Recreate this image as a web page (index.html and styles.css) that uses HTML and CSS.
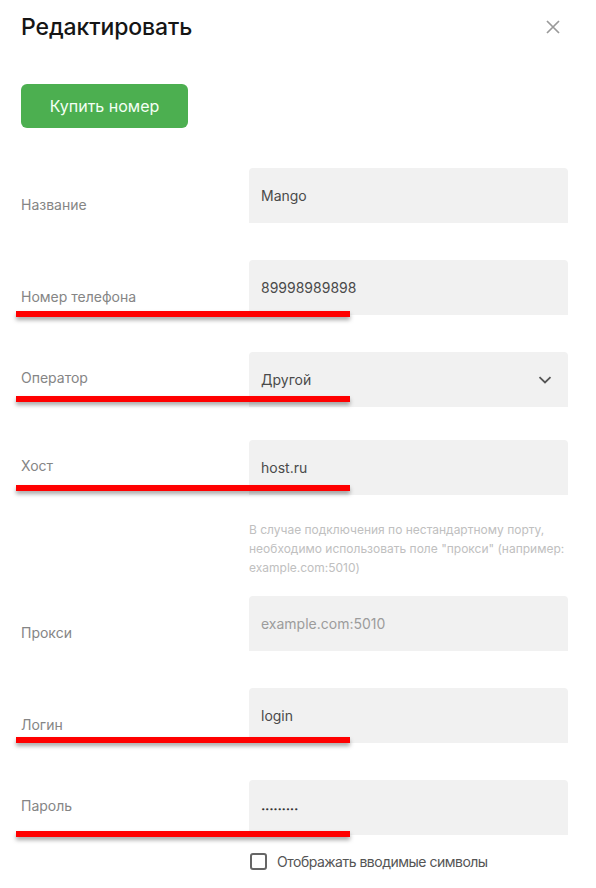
FILE: index.html
```html
<!DOCTYPE html>
<html lang="ru">
<head>
<meta charset="utf-8">
<title>Редактировать</title>
<link rel="stylesheet" href="styles.css">
</head>
<body>
<div class="modal">
  <header class="head">
    <h1 class="title">Редактировать</h1>
    <button class="close" aria-label="Закрыть">
      <svg width="14" height="14" viewBox="0 0 14 14"><path d="M1 1 L13 13 M13 1 L1 13" stroke="#9a9a9a" stroke-width="1.7" fill="none"/></svg>
    </button>
  </header>

  <button class="buy">Купить номер</button>

  <div class="form">
    <div class="row row-first">
      <label class="lbl lbl-low">Название</label>
      <div class="field"><span class="val">Mango</span></div>
    </div>

    <div class="row">
      <label class="lbl lbl-low">Номер телефона</label>
      <div class="field"><span class="val">89998989898</span></div>
      <span class="mark mark-a"></span>
    </div>

    <div class="row">
      <label class="lbl lbl-mid">Оператор</label>
      <div class="field field-select">
        <span class="val">Другой</span>
        <svg class="chev" width="14" height="8" viewBox="0 0 14 8"><path d="M1.5 1.2 L7 6.5 L12.5 1.2" stroke="#555" stroke-width="1.8" fill="none"/></svg>
      </div>
      <span class="mark mark-b"></span>
    </div>

    <div class="row row-tight">
      <label class="lbl lbl-mid">Хост</label>
      <div class="field"><span class="val">host.ru</span></div>
      <span class="mark mark-b2"></span>
    </div>

    <p class="hint">В случае подключения по нестандартному порту,<br>необходимо использовать поле "прокси" (например:<br>example.com:5010)</p>

    <div class="row row-after-hint">
      <label class="lbl lbl-low">Прокси</label>
      <div class="field"><span class="val placeholder">example.com:5010</span></div>
    </div>

    <div class="row">
      <label class="lbl lbl-low">Логин</label>
      <div class="field"><span class="val">login</span></div>
      <span class="mark mark-c"></span>
    </div>

    <div class="row">
      <label class="lbl lbl-mid">Пароль</label>
      <div class="field"><span class="val dots">•••••••••</span></div>
      <span class="mark mark-a"></span>
    </div>

    <div class="check-row">
      <span class="check"></span>
      <span class="check-text">Отображать вводимые символы</span>
    </div>
  </div>
</div>
</body>
</html>
```

FILE: styles.css
```css
html, body {
  margin: 0;
  padding: 0;
  background: #ffffff;
}
body {
  font-family: Inter, "Open Sans", "Liberation Sans", sans-serif;
  color: #333;
  width: 596px;
  height: 888px;
  overflow: hidden;
}
.modal {
  padding: 12px 28px 0 21px;
}
.head {
  display: flex;
  justify-content: space-between;
  align-items: flex-start;
}
.title {
  margin: 0;
  font-size: 23px;
  line-height: 30px;
  font-weight: 500;
  color: #151515;
  letter-spacing: -0.1px;
}
.close {
  border: 0;
  background: none;
  padding: 0;
  margin: 8px 8px 0 0;
  width: 14px;
  height: 14px;
  display: block;
}
.close svg { display: block; }
.buy {
  display: block;
  margin-top: 42px;
  width: 167px;
  height: 44px;
  border: 0;
  border-radius: 6px;
  background: #4caf50;
  color: #f4fff4;
  font-family: inherit;
  font-size: 16px;
  font-weight: 400;
  padding: 0;
}
.form {
  margin-top: 40px;
}
.row {
  position: relative;
  display: grid;
  grid-template-columns: 228px 319px;
  height: 55px;
  margin-top: 37px;
}
.row-first { margin-top: 0; }
.row-tight { margin-top: 33px; }
.row-after-hint { margin-top: 19px; }
.lbl {
  font-size: 14px;
  line-height: 20px;
  color: #858585;
}
.lbl-low { padding-top: 27px; }
.lbl-mid { padding-top: 16px; }
.field {
  background: #f1f1f1;
  border-radius: 4px 4px 0 0;
  padding: 18px 12px 0 12px;
  box-sizing: border-box;
  height: 55px;
  position: relative;
}
.val {
  display: block;
  font-size: 14px;
  line-height: 20px;
  color: #4a4a4a;
}
.placeholder { color: #9c9c9c; }
.dots {
  font-family: "DejaVu Sans", sans-serif;
  font-size: 7.5px;
  letter-spacing: -0.3px;
  color: #333;
  padding-top: 2px;
}
.field-select .chev {
  position: absolute;
  right: 16px;
  top: 24px;
}
.hint {
  margin: 25px 0 0 228px;
  font-size: 12px;
  line-height: 19px;
  color: #c0c0c0;
}
.check-row {
  display: flex;
  align-items: center;
  margin: 18px 0 0 229px;
}
.check {
  width: 17px;
  height: 17px;
  box-sizing: border-box;
  border: 2px solid #666;
  border-radius: 3px;
}
.check-text {
  margin-left: 10px;
  font-size: 14px;
  line-height: 17px;
  letter-spacing: -0.5px;
  color: #555;
}
.mark {
  position: absolute;
  left: -5px;
  width: 334px;
  height: 6px;
  background: #ff0000;
  box-shadow: 0 3px 4px rgba(0, 0, 0, 0.35);
}
.mark-a { top: 51px; }
.mark-b { top: 44px; }
.mark-b2 { top: 45px; }
.mark-c { top: 49px; }
```
